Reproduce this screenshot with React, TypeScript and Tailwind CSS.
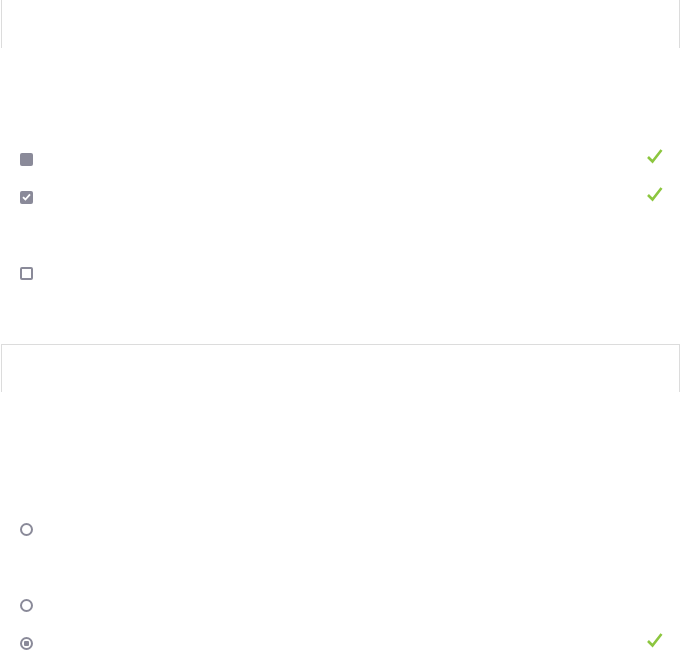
import React from "react";

const Tick = () => (
  <svg width="17" height="16" viewBox="0 0 17 16" className="block">
    <path d="M2 9 L6.5 13.5 L15.5 2" fill="none" stroke="#8cc63f" strokeWidth="2.6" strokeLinejoin="miter" />
  </svg>
);

const Row = ({ children, tick }: { children?: React.ReactNode; tick?: boolean }) => (
  <div className="h-[38px] flex items-center pl-5 pr-[18px]">
    <div className="w-[13px] h-[13px] flex items-center justify-center">{children}</div>
    <div className="flex-1" />
    {tick && <div className="-mt-[7px]"><Tick /></div>}
  </div>
);

const BoxFilled = () => <div className="w-[13px] h-[13px] rounded-[2px] bg-[#8a8a99]" />;
const BoxChecked = () => (
  <div className="w-[13px] h-[13px] rounded-[2px] bg-[#8a8a99] flex items-center justify-center">
    <svg width="9" height="8" viewBox="0 0 9 8"><path d="M1 4.2 L3.4 6.5 L8 1.3" fill="none" stroke="#fff" strokeWidth="1.8" /></svg>
  </div>
);
const BoxEmpty = () => <div className="w-[13px] h-[13px] rounded-[2px] border-2 border-[#8a8a99] bg-white" />;
const Radio = () => <div className="w-[13px] h-[13px] rounded-full border-2 border-[#8a8a99] bg-white" />;
const RadioChecked = () => (
  <div className="w-[13px] h-[13px] rounded-full border-2 border-[#8a8a99] bg-white flex items-center justify-center">
    <div className="w-[5px] h-[5px] rounded-[1px] bg-[#8a8a99]" />
  </div>
);

export default function App() {
  return (
    <div className="w-[681px] h-[650px] overflow-hidden bg-white font-['Liberation_Sans',sans-serif]">
      <div className="mx-px h-[48px] border-l border-r border-[#dcdcdc]" />
      <div className="h-[92px]" />
      <Row tick><BoxFilled /></Row>
      <Row tick><BoxChecked /></Row>
      <Row />
      <Row><BoxEmpty /></Row>
      <div className="h-[52px]" />
      <div className="mx-px h-[48px] border-l border-r border-t border-[#dcdcdc]" />
      <div className="h-[118px]" />
      <Row><Radio /></Row>
      <Row />
      <Row><Radio /></Row>
      <Row tick><RadioChecked /></Row>
    </div>
  );
}
